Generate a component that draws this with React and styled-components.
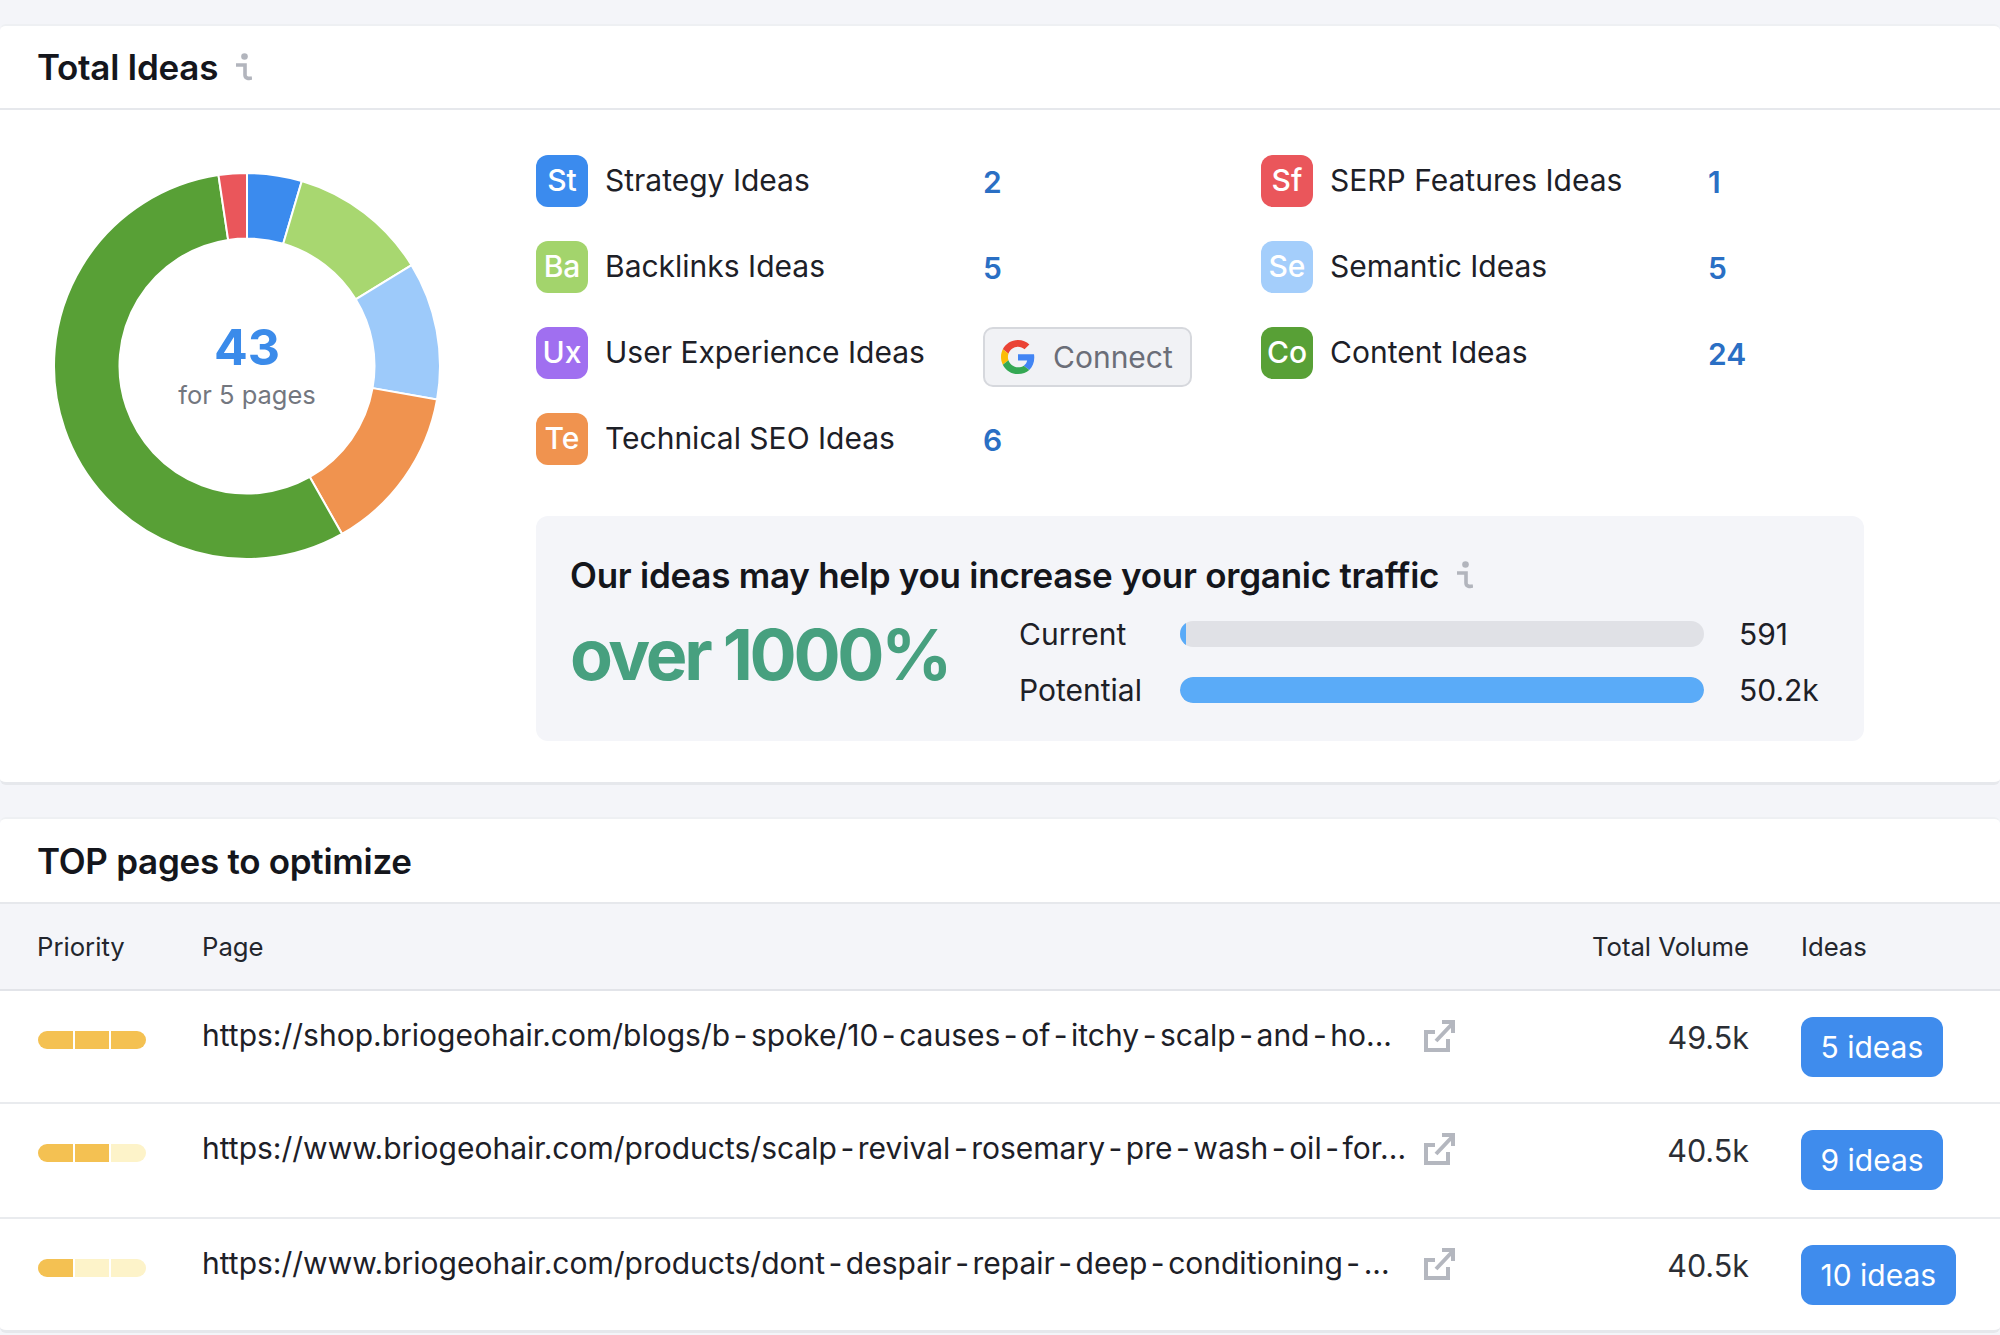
import React from "react";
import styled, { createGlobalStyle } from "styled-components";

const GlobalStyle = createGlobalStyle`
  html, body {
    margin: 0;
    background: #f4f5f9;
  }
  body {
    font-family: Inter, "Liberation Sans", sans-serif;
    color: #1d2027;
    height: 1335px;
    overflow: hidden;
  }
`;

const Page = styled.div`
  width: 2000px;
  height: 1335px;
  padding-top: 24px;
  box-sizing: border-box;
`;

const Card = styled.section`
  background: #fff;
  border-top: 2px solid #eef0f3;
  border-bottom: 3px solid #e6e8ec;
  border-radius: 6px;
  margin-bottom: ${(p) => p.$gap || 0}px;
`;

const CardHead = styled.div`
  display: flex;
  align-items: center;
  gap: 18px;
  padding-left: 37px;
  height: ${(p) => p.$height}px;
  box-sizing: border-box;
  border-bottom: 2px solid #e6e8ec;
`;

const CardTitle = styled.h2`
  margin: 0;
  font-size: 35px;
  font-weight: 600;
  letter-spacing: -0.28px;
  color: #14161c;
`;

const Overview = styled.div`
  display: flex;
  padding: 0 0 41px 54px;
`;

const DonutWrap = styled.div`
  position: relative;
  width: 386px;
  height: 386px;
  margin: 63px 96px 0 0;
  flex: none;
`;

const DonutCenter = styled.div`
  position: absolute;
  inset: 0;
  display: flex;
  flex-direction: column;
  align-items: center;
  justify-content: center;
  padding-top: 2px;
  box-sizing: border-box;
`;

const Total = styled.div`
  font-size: 50px;
  font-weight: 700;
  line-height: 50px;
  color: #3b8bea;
`;

const TotalNote = styled.div`
  font-size: 25.5px;
  line-height: 34px;
  margin-top: 6px;
  color: #73777f;
`;

const Side = styled.div`
  width: 1328px;
  padding-top: 45px;
`;

const Legend = styled.div`
  display: grid;
  grid-auto-flow: column;
  grid-template-rows: repeat(4, 52px);
  grid-template-columns: 725px 1fr;
  row-gap: 34px;
`;

const LegendItem = styled.div`
  display: grid;
  grid-template-columns: 52px 361px auto;
  grid-template-rows: 52px;
  column-gap: 17px;
  align-items: center;
`;

const Badge = styled.div`
  width: 52px;
  height: 52px;
  padding-bottom: 2px;
  box-sizing: border-box;
  border-radius: 12px;
  background: ${(p) => p.$color};
  color: #fff;
  font-size: 30px;
  font-weight: 500;
  display: flex;
  align-items: center;
  justify-content: center;
`;

const LegendLabel = styled.div`
  font-size: 30px;
  margin-top: -3px;
  color: #1d2027;
  white-space: nowrap;
`;

const LegendValue = styled.div`
  font-size: 30px;
  font-weight: 600;
  margin-top: 2px;
  color: #2a6fc4;
`;

const ConnectButton = styled.button`
  display: flex;
  align-items: center;
  align-self: start;
  gap: 18px;
  width: 209px;
  height: 60px;
  padding: 0 0 0 16px;
  box-sizing: border-box;
  background: #f1f2f5;
  border: 2px solid #d6d8dd;
  border-radius: 10px;
  font-family: inherit;
  font-size: 30px;
  color: #6b6e78;
`;

const Callout = styled.div`
  margin-top: 51px;
  height: 225px;
  box-sizing: border-box;
  padding: 38px 34px 0;
  background: #f4f5f9;
  border-radius: 12px;
`;

const CalloutTitle = styled.div`
  display: flex;
  align-items: center;
  gap: 18px;
  font-size: 35px;
  line-height: 42px;
  font-weight: 600;
  letter-spacing: -0.25px;
  color: #14161c;
`;

const CalloutBody = styled.div`
  display: flex;
  align-items: flex-start;
  margin-top: 12px;
`;

const Growth = styled.div`
  width: 449px;
  flex: none;
  margin-top: 4px;
  font-size: 70px;
  line-height: 85px;
  font-weight: 700;
  letter-spacing: -3.3px;
  color: #47a07f;
  white-space: nowrap;
`;

const Compare = styled.div`
  display: grid;
  grid-template-columns: 126px 524px auto;
  column-gap: 35px;
  row-gap: 20px;
  align-items: center;
  margin-top: 8px;
  font-size: 30px;
  line-height: 36px;
  color: #1d2027;
`;

const Track = styled.div`
  height: 26px;
  border-radius: 13px;
  background: #e0e1e6;
  overflow: hidden;
`;

const Fill = styled.div`
  height: 100%;
  border-radius: 13px;
  background: #5aabf8;
`;

const TableRow = styled.div`
  display: grid;
  grid-template-columns: 165px 1fr 212px 199px;
  padding-left: 37px;
  box-sizing: border-box;
`;

const TableHead = styled(TableRow)`
  height: 87px;
  align-items: center;
  background: #f4f5f9;
  border-bottom: 2px solid #e2e4e9;
  font-size: 25.7px;
  color: #23262d;
`;

const HeadRight = styled.div`
  text-align: right;
  padding-right: 52px;
`;

const PageRow = styled(TableRow)`
  height: ${(p) => p.$height}px;
  padding-top: 26px;
  border-bottom: ${(p) => (p.$last ? "0" : "2px solid #e9ebee")};
`;

const PriorityBar = styled.div`
  display: flex;
  gap: 2px;
  width: 108px;
  height: 18px;
  margin: 14px 0 0 1px;
  border-radius: 9px;
  overflow: hidden;
`;

const Segment = styled.div`
  flex: 1;
  background: ${(p) => (p.$on ? "#f4c152" : "#fdf3c9")};
`;

const PageCell = styled.div`
  display: grid;
  grid-template-columns: 1222px 31px;
  align-items: center;
  height: 36px;
`;

const PageUrl = styled.div`
  font-size: 30px;
  color: #1d2027;
  white-space: nowrap;
`;

const Dash = styled.span`
  margin: 0 3.5px;
`;

const Volume = styled.div`
  text-align: right;
  padding-right: 52px;
  font-size: 30.5px;
  line-height: 36px;
  margin-top: 3px;
  color: #2b2e35;
`;

const IdeasButton = styled.button`
  display: block;
  height: 60px;
  padding: 0 19.5px;
  border: 0;
  border-radius: 12px;
  background: #3f8ced;
  color: #fff;
  font-family: inherit;
  font-size: 30px;
`;

const InfoIcon = () => (
  <svg width="16" height="28" viewBox="0 0 16 28" fill="none">
    <circle cx="8.5" cy="3.5" r="3.3" fill="#b2b5bd" />
    <path d="M0 12h9v10c0 3 3 4 7 3" stroke="#b2b5bd" strokeWidth="3.6" />
  </svg>
);

const ExternalIcon = () => (
  <svg width="31" height="33" viewBox="0 0 31 33" fill="none" stroke="#b4b7bf" strokeWidth="4">
    <path d="M11 13H2v18h22V20" />
    <path d="M12 22 29 4" />
    <path d="M18 3h11v11" />
  </svg>
);

const GoogleLogo = () => (
  <svg width="34" height="34" viewBox="0 0 48 48">
    <path fill="#EA4335" d="M24 9.5c3.54 0 6.71 1.22 9.21 3.6l6.85-6.85C35.9 2.38 30.47 0 24 0 14.62 0 6.51 5.38 2.56 13.22l7.98 6.19C12.43 13.72 17.74 9.5 24 9.5z" />
    <path fill="#4285F4" d="M46.98 24.55c0-1.57-.15-3.09-.38-4.55H24v9.02h12.94c-.58 2.96-2.26 5.48-4.78 7.18l7.73 6c4.51-4.18 7.09-10.36 7.09-17.65z" />
    <path fill="#FBBC05" d="M10.53 28.59c-.48-1.45-.76-2.99-.76-4.59s.27-3.14.76-4.59l-7.98-6.19C.92 16.46 0 20.12 0 24c0 3.88.92 7.54 2.56 10.78l7.97-6.19z" />
    <path fill="#34A853" d="M24 48c6.48 0 11.93-2.13 15.89-5.81l-7.73-6c-2.15 1.45-4.92 2.3-8.16 2.3-6.26 0-11.57-4.22-13.47-9.91l-7.98 6.19C6.51 42.62 14.62 48 24 48z" />
  </svg>
);

// clockwise from 12 o'clock, angles read off the chart
const slices = [
  { from: 0, to: 16.5, color: "#3b8bee" },
  { from: 16.5, to: 58.5, color: "#a8d770" },
  { from: 58.5, to: 100, color: "#9dcafa" },
  { from: 100, to: 150.5, color: "#f0934f" },
  { from: 150.5, to: 351.5, color: "#58a036" },
  { from: 351.5, to: 360, color: "#ea565b" },
];

const polar = (r, deg) => {
  const a = (deg * Math.PI) / 180;
  return `${193 + r * Math.sin(a)} ${193 - r * Math.cos(a)}`;
};

const slicePath = ({ from, to }) => {
  const large = to - from > 180 ? 1 : 0;
  return `M${polar(193, from)} A193 193 0 ${large} 1 ${polar(193, to)} L${polar(127.5, to)} A127.5 127.5 0 ${large} 0 ${polar(127.5, from)}Z`;
};

const Donut = () => (
  <DonutWrap>
    <svg width="386" height="386" viewBox="0 0 386 386">
      {slices.map((s) => (
        <path key={s.from} d={slicePath(s)} fill={s.color} stroke="#fff" strokeWidth="2" />
      ))}
    </svg>
    <DonutCenter>
      <Total>43</Total>
      <TotalNote>for 5 pages</TotalNote>
    </DonutCenter>
  </DonutWrap>
);

const legend = [
  { code: "St", color: "#3b8bee", label: "Strategy Ideas", value: "2" },
  { code: "Ba", color: "#a3d46c", label: "Backlinks Ideas", value: "5" },
  { code: "Ux", color: "#a06ff0", label: "User Experience Ideas", connect: true },
  { code: "Te", color: "#f0934f", label: "Technical SEO Ideas", value: "6" },
  { code: "Sf", color: "#ea565b", label: "SERP Features Ideas", value: "1" },
  { code: "Se", color: "#a4cefb", label: "Semantic Ideas", value: "5" },
  { code: "Co", color: "#58a036", label: "Content Ideas", value: "24" },
];

const pages = [
  { url: "https://shop.briogeohair.com/blogs/b-spoke/10-causes-of-itchy-scalp-and-ho...", volume: "49.5k", ideas: "5 ideas", level: 3, height: 113 },
  { url: "https://www.briogeohair.com/products/scalp-revival-rosemary-pre-wash-oil-for...", volume: "40.5k", ideas: "9 ideas", level: 2, height: 115 },
  { url: "https://www.briogeohair.com/products/dont-despair-repair-deep-conditioning-...", volume: "40.5k", ideas: "10 ideas", level: 1, height: 111, last: true },
];

const spacedUrl = (url) =>
  url.split("-").map((part, i) => (
    <React.Fragment key={i}>
      {i > 0 && <Dash>-</Dash>}
      {part}
    </React.Fragment>
  ));

export default function App() {
  return (
    <Page>
      <GlobalStyle />
      <Card $gap={32}>
        <CardHead $height={84}>
          <CardTitle>Total Ideas</CardTitle>
          <InfoIcon />
        </CardHead>
        <Overview>
          <Donut />
          <Side>
            <Legend>
              {legend.map((item) => (
                <LegendItem key={item.code}>
                  <Badge $color={item.color}>{item.code}</Badge>
                  <LegendLabel>{item.label}</LegendLabel>
                  {item.connect ? (
                    <ConnectButton>
                      <GoogleLogo />
                      Connect
                    </ConnectButton>
                  ) : (
                    <LegendValue>{item.value}</LegendValue>
                  )}
                </LegendItem>
              ))}
            </Legend>
            <Callout>
              <CalloutTitle>
                Our ideas may help you increase your organic traffic
                <InfoIcon />
              </CalloutTitle>
              <CalloutBody>
                <Growth>over 1000%</Growth>
                <Compare>
                  <div>Current</div>
                  <Track>
                    <Fill style={{ width: "1.2%" }} />
                  </Track>
                  <div>591</div>
                  <div>Potential</div>
                  <Track>
                    <Fill style={{ width: "100%" }} />
                  </Track>
                  <div>50.2k</div>
                </Compare>
              </CalloutBody>
            </Callout>
          </Side>
        </Overview>
      </Card>
      <Card>
        <CardHead $height={85}>
          <CardTitle>TOP pages to optimize</CardTitle>
        </CardHead>
        <TableHead>
          <div>Priority</div>
          <div>Page</div>
          <HeadRight>Total Volume</HeadRight>
          <div>Ideas</div>
        </TableHead>
        {pages.map((p) => (
          <PageRow key={p.url} $height={p.height} $last={p.last}>
            <PriorityBar>
              {[1, 2, 3].map((n) => (
                <Segment key={n} $on={n <= p.level} />
              ))}
            </PriorityBar>
            <PageCell>
              <PageUrl>{spacedUrl(p.url)}</PageUrl>
              <ExternalIcon />
            </PageCell>
            <Volume>{p.volume}</Volume>
            <div>
              <IdeasButton>{p.ideas}</IdeasButton>
            </div>
          </PageRow>
        ))}
      </Card>
    </Page>
  );
}
